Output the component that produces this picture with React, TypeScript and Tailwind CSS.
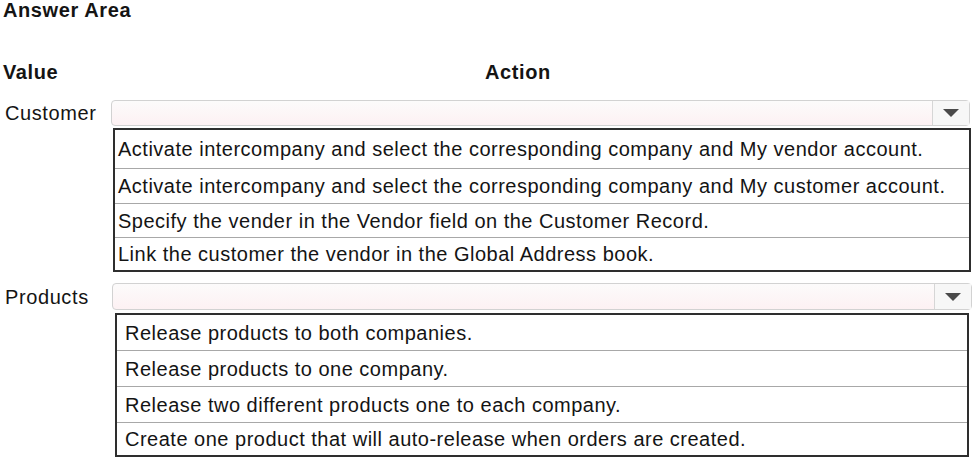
import React from "react";

// Answer area: two dropdown questions with their option lists shown open

const customerOptions = [
  { text: "Activate intercompany and select the corresponding company and My vendor account.", h: "h-[38px]" },
  { text: "Activate intercompany and select the corresponding company and My customer account.", h: "h-[35px]" },
  { text: "Specify the vender in the Vendor field on the Customer Record.", h: "h-[34px]" },
  { text: "Link the customer the vendor in the Global Address book.", h: "h-[33px]" },
];

const productOptions = [
  { text: "Release products to both companies.", h: "h-[35px]" },
  { text: "Release products to one company.", h: "h-[36px]" },
  { text: "Release two different products one to each company.", h: "h-[36px]" },
  { text: "Create one product that will auto-release when orders are created.", h: "h-[33px]" },
];

function Dropdown({ className }: { className: string }) {
  return (
    <div
      className={`flex items-stretch rounded-[4px] border border-[#d2d2d2] bg-gradient-to-b from-[#fcfbfb] to-[#fdf1f3] ${className}`}
    >
      <div className="flex-1" />
      <div className="flex w-[37px] items-center justify-center border-l border-[#d6d6d6] bg-[#f7f7f7]">
        <svg width="16" height="8" viewBox="0 0 16 8">
          <path d="M0 0 H16 L8 8 Z" fill="#4a4a4a" />
        </svg>
      </div>
    </div>
  );
}

export default function App() {
  return (
    <div
      className="h-[458px] w-[974px] overflow-hidden bg-white text-[#141414]"
      style={{ fontFamily: '"Liberation Sans", Arial, sans-serif' }}
    >
      <div className="pl-[3px] text-[20px] font-bold leading-[20px] tracking-[0.6px]">Answer Area</div>

      {/* Column headers */}
      <div className="mt-[42px] flex text-[20px] font-bold leading-[20px] tracking-[0.6px]">
        <div className="w-[485px] pl-[3px]">Value</div>
        <div>Action</div>
      </div>

      {/* Customer */}
      <div className="mt-[18px] flex items-center">
        <div className="w-[111px] pl-[5px] text-[20px] leading-[20px] tracking-[0.6px]">Customer</div>
        <Dropdown className="h-[26px] w-[859px]" />
      </div>
      <div className="ml-[113px] mt-[2px] w-[858px] border-2 border-[#2e2e2e]">
        {customerOptions.map((o, i) => (
          <div
            key={i}
            className={`flex items-center pl-[3px] text-[20px] leading-[20px] tracking-[0.5px] ${o.h} ${
              i > 0 ? "border-t border-[#a8a8a8]" : ""
            }`}
          >
            {o.text}
          </div>
        ))}
      </div>

      {/* Products */}
      <div className="mt-[11px] flex items-center">
        <div className="w-[112px] pl-[5px] text-[20px] leading-[20px] tracking-[0.6px]">Products</div>
        <Dropdown className="h-[27px] w-[860px]" />
      </div>
      <div className="ml-[115px] mt-[3px] w-[854px] border-2 border-[#2e2e2e]">
        {productOptions.map((o, i) => (
          <div
            key={i}
            className={`flex items-center pl-[8px] text-[20px] leading-[20px] tracking-[0.5px] ${o.h} ${
              i > 0 ? "border-t border-[#a8a8a8]" : ""
            }`}
          >
            {o.text}
          </div>
        ))}
      </div>
    </div>
  );
}
